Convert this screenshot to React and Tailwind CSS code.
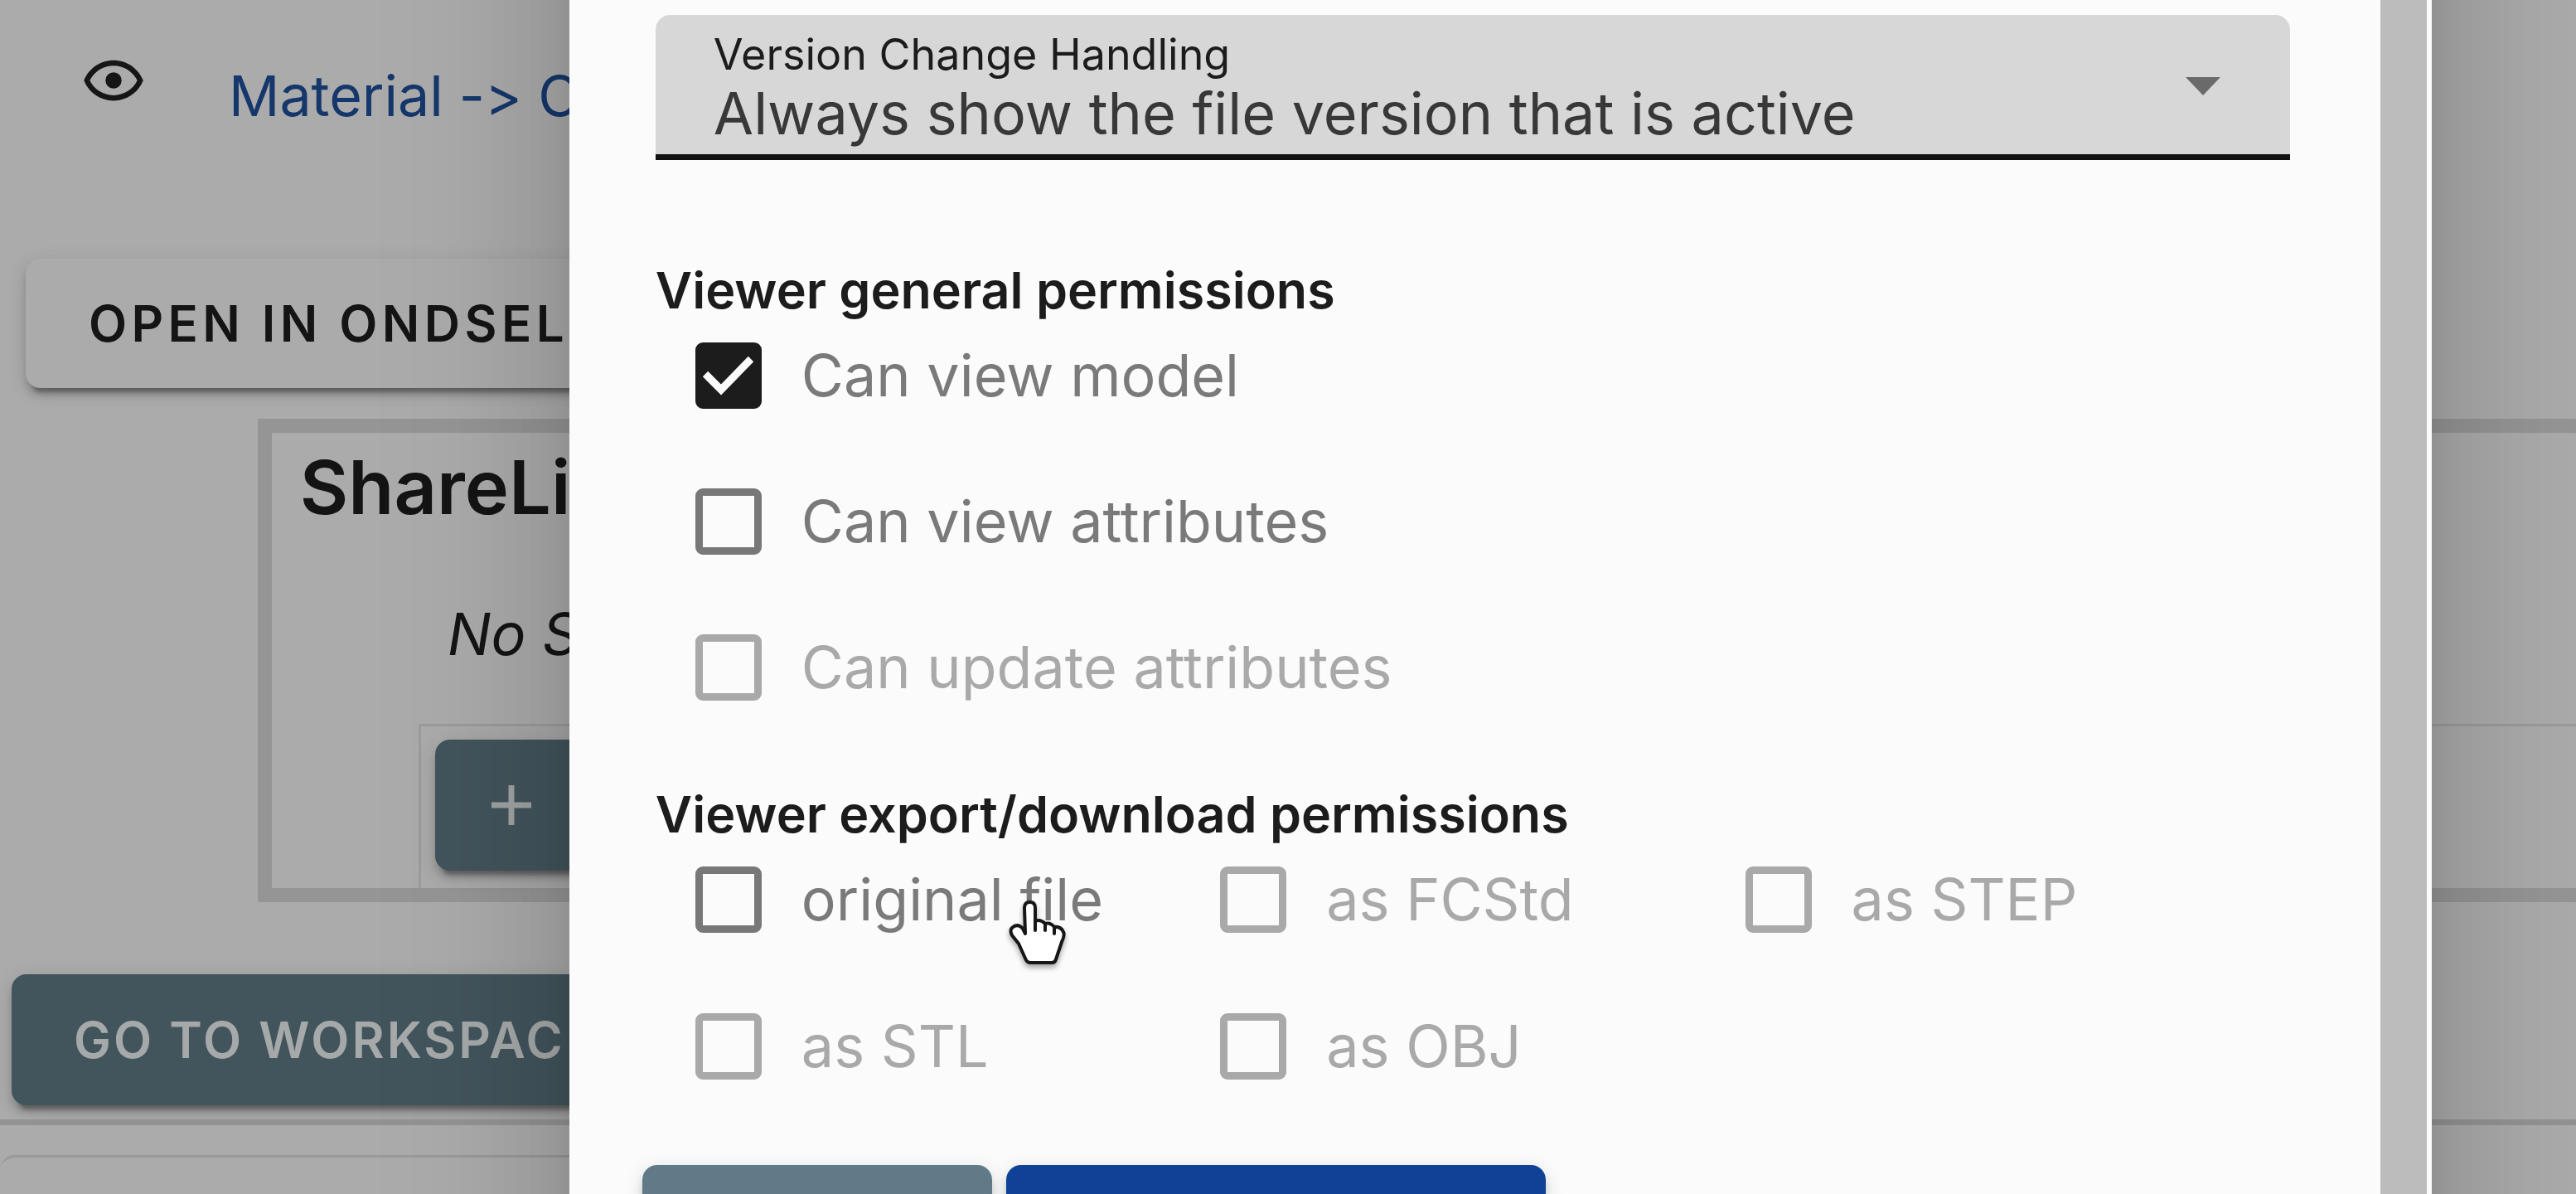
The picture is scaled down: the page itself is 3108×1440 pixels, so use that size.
import React from "react";

function EyeIcon() {
  return (
    <svg viewBox="0 0 24 24" className="size-[78px] fill-[#161616]" aria-hidden="true">
      <path d="M12,9A3,3 0 0,1 15,12A3,3 0 0,1 12,15A3,3 0 0,1 9,12A3,3 0 0,1 12,9M12,4.5C17,4.5 21.27,7.61 23,12C21.27,16.39 17,19.5 12,19.5C7,19.5 2.73,16.39 1,12C2.73,7.61 7,4.5 12,4.5M3.18,12C4.83,15.36 8.24,17.5 12,17.5C15.76,17.5 19.17,15.36 20.82,12C19.17,8.64 15.76,6.5 12,6.5C8.24,6.5 4.83,8.64 3.18,12Z" />
    </svg>
  );
}

function HandPointer() {
  return (
    <svg
      viewBox="0 0 68 78"
      className="pointer-events-none absolute left-[379px] top-16 h-[78px] w-[68px] overflow-visible drop-shadow-[0_4px_3px_rgba(0,0,0,0.35)]"
      aria-hidden="true"
    >
      <path
        d="M19 40 L18 9 Q18 2 24.500 2 Q31 2 31 9 L31 25 Q37 22 43 28 Q49 26 54 32 Q62 31 65 38 Q67 42 63 50 L56 71 Q55 75 51 75 L25 75 Q22 75 20 72 L11 52 L3 42 Q0 36 3 33 Q10 27 16 34 Z"
        fill="#fff"
        stroke="#161616"
        strokeWidth="4"
        strokeLinejoin="round"
      />
      <path d="M31 25 V36 M43 28 V36 M54 32 V40" stroke="#161616" strokeWidth="4" strokeLinecap="round" fill="none" />
    </svg>
  );
}

function Permission({ id, label, checked, disabled, children }) {
  return (
    <div className="relative flex h-[126px] items-center gap-12">
      <span className="relative flex size-20 shrink-0">
        <input
          id={id}
          type="checkbox"
          defaultChecked={checked}
          disabled={disabled}
          className="peer size-20 appearance-none rounded-[9px] border-[9px] border-[#787878] checked:border-[#1c1c1c] checked:bg-[#1c1c1c] disabled:border-[#a9a9a9]"
        />
        <svg
          viewBox="0 0 80 80"
          className="pointer-events-none absolute inset-0 hidden size-20 peer-checked:block"
          aria-hidden="true"
        >
          <path d="M12 38 L31 57 L67 20" fill="none" stroke="#fbfbfb" strokeWidth="9" />
        </svg>
      </span>
      <label
        htmlFor={id}
        className={
          disabled
            ? "whitespace-nowrap text-[70px] leading-[90px] text-[#a9a9a9]"
            : "whitespace-nowrap text-[70px] leading-[90px] text-[#7a7a7a]"
        }
      >
        {label}
      </label>
      {children}
    </div>
  );
}

function WorkspacePage() {
  return (
    <main className="flex h-screen flex-col overflow-hidden whitespace-nowrap bg-[#ababab] text-[#141414]">
      <div className="flex h-[312px] shrink-0 items-start gap-[100px] pl-[98px] pt-[58px]">
        <EyeIcon />
        <a href="#material" className="mt-3 text-[68px] leading-[90px] text-[#15376b] [font-feature-settings:'calt'_0]">
          Material -&gt; C
        </a>
      </div>
      <button
        type="button"
        className="ml-[31px] flex h-[156px] w-[900px] shrink-0 items-center rounded-[18px] bg-[#ababab] pl-[76px] text-[60px] font-semibold tracking-[0.09em] shadow-[0_14px_5px_-9px_rgba(0,0,0,0.3),0_9px_9px_0_rgba(0,0,0,0.14),0_5px_23px_0_rgba(0,0,0,0.12)]"
      >
        OPEN IN ONDSEL
      </button>
      <section className="ml-[10%] mt-[37px] shrink-0 border-y-[17px] border-l-[17px] border-[#959595]">
        <h2 className="pl-[34px] pt-[18px] text-[90px] font-semibold leading-[96px]">ShareLi</h2>
        <p className="mt-[84px] pl-[212px] text-[70px] italic leading-[90px]">No S</p>
        <div className="ml-[177px] mt-[63px] border-l-[3px] border-t-[3px] border-[#9b9b9b] pb-[21px] pl-[17px] pt-4">
          <button
            type="button"
            aria-label="Add"
            className="flex h-[158px] w-[500px] items-center rounded-[18px] bg-[#42545c] pl-[68px] shadow-[0_14px_5px_-9px_rgba(0,0,0,0.3),0_9px_9px_0_rgba(0,0,0,0.14),0_5px_23px_0_rgba(0,0,0,0.12)]"
          >
            <svg viewBox="0 0 48 48" className="size-12" aria-hidden="true">
              <path d="M24 0V48M0 24H48" stroke="#a0a3a3" strokeWidth="7" />
            </svg>
          </button>
        </div>
      </section>
      <button
        type="button"
        className="ml-[14px] mt-[87px] flex h-[158px] w-[900px] shrink-0 items-center rounded-[18px] bg-[#42545c] pl-[75px] text-[60px] font-semibold tracking-wider text-[#a6a9a9] shadow-[0_14px_5px_-9px_rgba(0,0,0,0.3),0_9px_9px_0_rgba(0,0,0,0.14),0_5px_23px_0_rgba(0,0,0,0.12)]"
      >
        GO TO WORKSPAC
      </button>
      <hr className="mt-[17px] h-[7px] shrink-0 border-0 bg-[#939393]" />
      <div className="mt-9 w-1/2 grow rounded-tl-[18px] border-t-[3px] border-[#999999]" />
    </main>
  );
}

function ShareDialog() {
  return (
    <div className="fixed -inset-y-96 left-0 right-0 flex pl-[22.1%] pr-[5.6%]">
      <div
        role="dialog"
        aria-label="Viewer permissions"
        className="flex grow bg-[#fbfbfb] py-96 pr-[6px] text-[#1c1c1c] shadow-[0_50px_68px_-32px_rgba(0,0,0,0.2),0_108px_171px_14px_rgba(0,0,0,0.11),0_41px_207px_36px_rgba(0,0,0,0.1)]"
      >
        <form className="flex grow flex-col pl-[104px] pr-[109px] pt-[18px]">
          <div className="relative flex flex-col rounded-t-[18px] border-b-[7px] border-[#121212] bg-[#d7d7d7] pb-2 pt-[18px]">
            <label htmlFor="version" className="pl-[70px] text-[52px] leading-[60px]">
              Version Change Handling
            </label>
            <select
              id="version"
              className="appearance-none bg-transparent pl-[70px] text-[70px] leading-[82px] text-[#383838]"
            >
              <option>Always show the file version that is active</option>
            </select>
            <svg
              viewBox="0 0 42 22"
              className="pointer-events-none absolute right-[84px] top-[75px] h-[22px] w-[42px] fill-[#6a6a6a]"
              aria-hidden="true"
            >
              <path d="M0 0H42L21 22Z" />
            </svg>
          </div>

          <h3 className="mt-[117px] text-[61px] font-semibold leading-[80px]">Viewer general permissions</h3>
          <div className="flex flex-col gap-[50px] pl-12">
            <Permission id="view-model" label="Can view model" checked />
            <Permission id="view-attributes" label="Can view attributes" />
            <Permission id="update-attributes" label="Can update attributes" disabled />
          </div>

          <h3 className="mt-[74px] text-[61px] font-semibold leading-[80px]">Viewer export/download permissions</h3>
          <div className="grid grid-cols-3 gap-y-[51px] pl-12 pr-6">
            <Permission id="original" label="original file">
              <HandPointer />
            </Permission>
            <Permission id="fcstd" label="as FCStd" disabled />
            <Permission id="step" label="as STEP" disabled />
            <Permission id="stl" label="as STL" disabled />
            <Permission id="obj" label="as OBJ" disabled />
          </div>

          <div className="-ml-4 mt-[80px] flex gap-[17px]">
            <button
              type="button"
              aria-label="Cancel"
              className="h-[158px] w-[422px] rounded-[18px] bg-[#607b87] shadow-[0_9px_9px_0_rgba(0,0,0,0.14),0_5px_23px_0_rgba(0,0,0,0.12)]"
            />
            <button
              type="button"
              aria-label="Share"
              className="h-[158px] w-[651px] rounded-[18px] bg-[#0f4296] shadow-[0_9px_9px_0_rgba(0,0,0,0.14),0_5px_23px_0_rgba(0,0,0,0.12)]"
            />
          </div>
        </form>
        <div className="-my-96 w-14 shrink-0 bg-[#bcbcbc]" />
      </div>
    </div>
  );
}

export default function App() {
  return (
    <div className="font-[Inter,sans-serif]">
      <WorkspacePage />
      <ShareDialog />
    </div>
  );
}
